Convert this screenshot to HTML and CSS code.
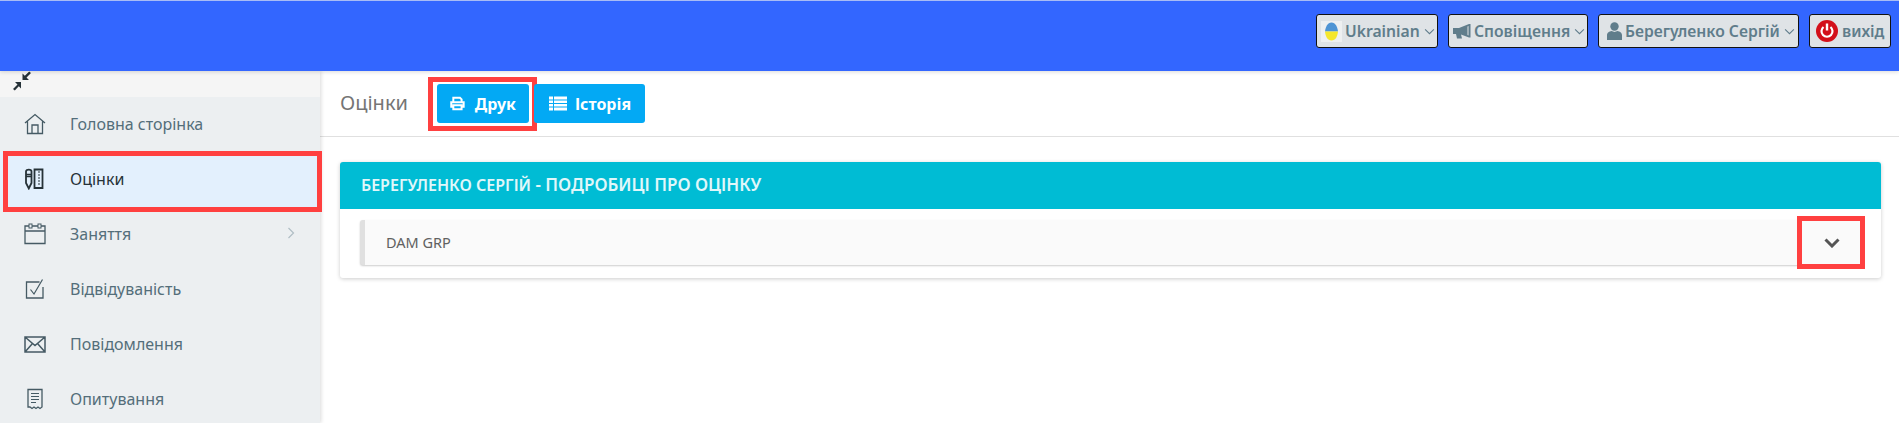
FILE: index.html
```html
<!DOCTYPE html>
<html lang="uk">
<head>
    <meta charset="UTF-8">
    <title>Оцінки</title>
    <link rel="stylesheet" href="styles.css">
</head>
<body>
    <header class="topbar">
        <button type="button" class="top-btn lang-btn">
            <svg class="flag" viewBox="0 0 21 21">
                <rect width="21" height="21" fill="#eef0f1"/>
                <path d="M10.500 1.500C6.500 1.500 4.500 6 4 10.500H17C16.500 6 14.500 1.500 10.500 1.500Z" fill="#4f94d4"/>
                <path d="M4 10.500C4.500 15.500 6.500 19.500 10.500 19.500S16.500 15.500 17 10.500Z" fill="#f5e72c"/>
            </svg>
            Ukrainian
            <svg class="caret" viewBox="0 0 12 8"><path d="M1 1.500L6 6.500L11 1.500" fill="none" stroke="#607d8b" stroke-width="1.200"/></svg>
        </button>
        <button type="button" class="top-btn notify-btn">
            <svg class="megaphone" viewBox="0 0 18 15"><path d="M0 4H6L16 0H17.500V13.500H16L8 10.500L9 14.500H4L3 10H0Z" fill="#607d8b"/><path d="M15.500 2L14.500 2.500V11L15.500 11.500Z" fill="#dfe3e6"/></svg>
            Сповіщення
            <svg class="caret" viewBox="0 0 12 8"><path d="M1 1.500L6 6.500L11 1.500" fill="none" stroke="#607d8b" stroke-width="1.200"/></svg>
        </button>
        <button type="button" class="top-btn user-btn">
            <svg class="user" viewBox="0 0 15 18"><circle cx="7.500" cy="4.500" r="4.200" fill="#607d8b"/><path d="M0 18V13C0 10.500 2.500 9.500 4.500 9L7.500 10L10.500 9C12.500 9.500 15 10.500 15 13V18Z" fill="#607d8b"/></svg>
            Берегуленко Сергій
            <svg class="caret" viewBox="0 0 12 8"><path d="M1 1.500L6 6.500L11 1.500" fill="none" stroke="#607d8b" stroke-width="1.200"/></svg>
        </button>
        <button type="button" class="top-btn logout-btn">
            <svg class="power" viewBox="0 0 22 22"><circle cx="11" cy="11" r="11" fill="#d3101a"/><path d="M7.500 7A5.500 5.500 0 1 0 14.500 7" fill="none" stroke="#fff" stroke-width="2.200"/><path d="M11 3.500V10.500" stroke="#fff" stroke-width="2.400"/></svg>
            вихід
        </button>
    </header>

    <div class="layout">
        <aside class="sidebar">
            <div class="collapse-bar">
                <svg class="collapse-icon" viewBox="0 0 20 20"><path d="M19 2L14.500 6.500L17 9H10.500V2.500L12.800 4.800L17.200 .5Z" fill="#263238"/><path d="M1 18L5.500 13.500L3 11H9V17.500L6.800 15.200L2.800 19.500Z" fill="#263238"/></svg>
            </div>
            <nav class="menu">
                <a class="menu-item">
                    <svg class="menu-icon" viewBox="0 0 22 22"><path d="M1 10L11 1.500L21 10M3.500 8.500V20.500H18.500V8.500M8 20.500V12H14V20.500" fill="none" stroke="#455a64" stroke-width="1.300"/></svg>
                    Головна сторінка
                </a>
                <a class="menu-item active">
                    <svg class="menu-icon" viewBox="0 0 22 22"><path d="M2 3.500C2 1 7.500 1 7.500 3.500V15L4.800 20.500L2 15Z" fill="none" stroke="#263238" stroke-width="1.800"/><path d="M2 6.500H7.500M2 8.500H7.500" stroke="#263238" stroke-width="1.500"/><path d="M10.500 1.500H18.500V20H10.500Z" fill="none" stroke="#263238" stroke-width="1.800"/><path d="M14 4H16M14 7H16M14 10H16M14 13H16M14 16H16" stroke="#263238" stroke-width="1.200"/></svg>
                    Оцінки
                    <span class="mark mark-menu"></span>
                </a>
                <a class="menu-item">
                    <svg class="menu-icon" viewBox="0 0 22 22"><path d="M5 3H1V20.500H21V3H17M8 3H14M1 8H21" fill="none" stroke="#455a64" stroke-width="1.300"/><rect x="5" y="1" width="3" height="4" fill="none" stroke="#455a64"/><rect x="14" y="1" width="3" height="4" fill="none" stroke="#455a64"/></svg>
                    Заняття
                    <svg class="arrow" viewBox="0 0 8 12"><path d="M1.500 1L6.500 6L1.500 11" fill="none" stroke="#b0bec5" stroke-width="1.200"/></svg>
                </a>
                <a class="menu-item">
                    <svg class="menu-icon" viewBox="0 0 22 22"><path d="M15.500 4H2.500V20H19V9" fill="none" stroke="#455a64" stroke-width="1.300"/><path d="M6.500 11.500L10 16L18.500 1.500" fill="none" stroke="#455a64" stroke-width="1.200"/></svg>
                    Відвідуваність
                </a>
                <a class="menu-item">
                    <svg class="menu-icon" viewBox="0 0 22 22"><path d="M1 4H21V19H1ZM1 4L11 12.500L21 4M1 19L8.500 10.500M21 19L13.500 10.500" fill="none" stroke="#455a64" stroke-width="1.500"/></svg>
                    Повідомлення
                </a>
                <a class="menu-item">
                    <svg class="menu-icon" viewBox="0 0 22 22"><path d="M4 19V1.500H18V19L16 20.500L14 19L12 20.500L10 19L8 20.500L6 19Z" fill="none" stroke="#455a64" stroke-width="1.300"/><path d="M7 5.500H15M7 8.500H15M7 11.500H15M7 14.500H12" stroke="#455a64" stroke-width="1.200"/></svg>
                    Опитування
                </a>
            </nav>
        </aside>

        <main class="content">
            <div class="page-bar">
                <h1 class="page-title">Оцінки</h1>
                <button type="button" class="action-btn print-btn">
                    <svg class="btn-icon" viewBox="0 0 18 16"><path d="M4 6V1H12L14 3V6M4 12H1.500V6.500H16.500V12H14M4 10H14V15H4Z" fill="none" stroke="#fff" stroke-width="2.400"/></svg>
                    Друк
                    <span class="mark mark-print"></span>
                </button>
                <button type="button" class="action-btn history-btn">
                    <svg class="btn-icon" viewBox="0 0 18 14"><path d="M0 0H4V3H0ZM5 0H18V3H5ZM0 4H4V6.500H0ZM5 4H18V6.500H5ZM0 7.500H4V10H0ZM5 7.500H18V10H5ZM0 11H4V14H0ZM5 11H18V14H5Z" fill="#fff"/></svg>
                    Історія
                </button>
            </div>
            <section class="card">
                <div class="card-head"><b>БЕРЕГУЛЕНКО СЕРГІЙ</b> - ПОДРОБИЦІ ПРО ОЦІНКУ</div>
                <div class="card-body">
                    <div class="group-row">
                        <span class="group-name">DAM GRP</span>
                        <span class="toggle">
                            <svg class="chevron" viewBox="0 0 16 10"><path d="M1.500 1.500L8 8L14.500 1.500" fill="none" stroke="#555" stroke-width="3"/></svg>
                            <span class="mark mark-toggle"></span>
                        </span>
                    </div>
                </div>
            </section>
        </main>
    </div>
</body>
</html>
```

FILE: styles.css
```css
* {
    box-sizing: border-box;
}
html, body {
    height: 100%;
}
body {
    margin: 0;
    overflow: hidden;
    background-color: #fff;
    font-family: "Noto Sans", Arial, sans-serif;
    font-size: 16px;
    color: #455a64;
}
.topbar {
    height: 71px;
    padding: 14px 8px 0 0;
    display: flex;
    justify-content: flex-end;
    align-items: flex-start;
    gap: 10px;
    background-color: #3366ff;
    border-top: 1px solid #a9bcf5;
    box-shadow: 0 1px 4px rgba(0, 0, 0, 0.15);
    position: relative;
    z-index: 2;
}
.top-btn {
    height: 34px;
    margin-top: -1px;
    padding: 0;
    display: flex;
    align-items: center;
    background-color: #dfe3e6;
    border: 1px solid #111;
    border-radius: 3px;
    font-family: inherit;
    font-size: 15.7px;
    font-weight: 600;
    color: #607d8b;
    white-space: nowrap;
}
.lang-btn {
    width: 122px;
    padding-left: 4px;
}
.notify-btn {
    width: 140px;
    padding-left: 4px;
}
.user-btn {
    width: 201px;
    padding-left: 4px;
}
.logout-btn {
    width: 82px;
    padding-left: 6px;
}
.flag {
    width: 21px;
    height: 21px;
    margin-right: 3px;
}
.megaphone {
    width: 18px;
    height: 15px;
    margin-right: 3px;
}
.user {
    width: 15px;
    height: 18px;
    margin: 0 3px 0 4px;
}
.power {
    width: 22px;
    height: 22px;
    margin-right: 4px;
}
.caret {
    width: 11px;
    height: 7px;
    margin-left: 4px;
}
.layout {
    display: flex;
    height: calc(100% - 71px);
}
.sidebar {
    width: 320px;
    flex-shrink: 0;
    background-color: #eceff1;
    box-shadow: 1px 0 4px rgba(0, 0, 0, 0.15);
    position: relative;
    z-index: 1;
}
.collapse-bar {
    height: 26px;
    padding-left: 12px;
    background-color: #f5f5f5;
}
.collapse-icon {
    display: block;
    width: 20px;
    height: 20px;
}
.menu-item {
    height: 55px;
    padding: 0 0 2px 24px;
    display: flex;
    align-items: center;
    position: relative;
    font-size: 16px;
    color: #546e7a;
}
.menu-item.active {
    background-color: #e3f0fd;
    color: #263238;
}
.menu-icon {
    width: 22px;
    height: 22px;
    margin-right: 24px;
    flex-shrink: 0;
}
.arrow {
    width: 8px;
    height: 12px;
    position: absolute;
    right: 25px;
    top: 20px;
}
.mark {
    position: absolute;
    border: 5px solid #ff4040;
    pointer-events: none;
}
.mark-menu {
    left: 3px;
    right: -2px;
    top: -1px;
    bottom: -5px;
}
.mark-print {
    left: -9px;
    right: -8px;
    top: -7px;
    bottom: -8px;
}
.mark-toggle {
    inset: 0;
}
.content {
    flex: 1;
    min-width: 0;
}
.page-bar {
    height: 66px;
    padding: 13px 0 0 20px;
    display: flex;
    align-items: flex-start;
    border-bottom: 1px solid #e0e0e0;
}
.page-title {
    margin: 0 29px 0 0;
    height: 39px;
    line-height: 37px;
    font-size: 20px;
    font-weight: 400;
    color: #757575;
}
.action-btn {
    height: 39px;
    padding: 0 13px;
    display: flex;
    align-items: center;
    position: relative;
    background-color: #03a9f4;
    border: none;
    border-radius: 3px;
    font-family: inherit;
    font-size: 16px;
    font-weight: 700;
    color: #fff;
}
.print-btn {
    width: 92px;
}
.print-btn .btn-icon {
    margin-right: 10px;
}
.history-btn {
    width: 111px;
    margin-left: 5px;
    padding-left: 15px;
}
.btn-icon {
    width: 18px;
    height: 15px;
    margin-right: 8px;
}
.card {
    margin: 25px 18px 0 20px;
    height: 116px;
    background-color: #fff;
    border-radius: 3px;
    box-shadow: 0 1px 4px rgba(0, 0, 0, 0.2);
}
.card-head {
    height: 47px;
    padding-left: 21px;
    line-height: 46px;
    background-color: #00bcd4;
    border-radius: 3px 3px 0 0;
    font-size: 17px;
    font-weight: 600;
    color: #e0f7fa;
}
.card-head b {
    font-size: 16px;
    font-weight: 600;
}
.card-body {
    padding: 11px 20px 0;
}
.group-row {
    height: 45px;
    padding-left: 21px;
    display: flex;
    align-items: center;
    justify-content: space-between;
    background-color: #fafafa;
    border-left: 5px solid #e0e0e0;
    border-radius: 3px;
    box-shadow: 0 1px 2px rgba(0, 0, 0, 0.2);
    font-size: 14.500px;
    color: #616161;
}
.group-name {
    padding-bottom: 2px;
}
.toggle {
    width: 68px;
    height: 53px;
    margin-right: -4px;
    display: flex;
    align-items: center;
    justify-content: center;
    position: relative;
}
.chevron {
    width: 16px;
    height: 10px;
    margin-left: 2px;
}
```
